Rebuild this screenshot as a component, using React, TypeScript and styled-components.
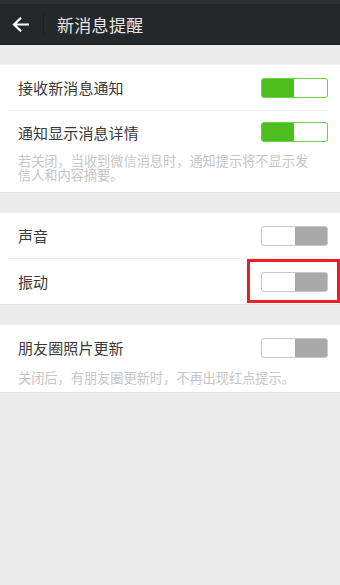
import React from "react";
import styled, { createGlobalStyle } from "styled-components";

const Global = createGlobalStyle`
  html, body { margin: 0; padding: 0; background: #ebebeb; }
  body { font-family: "Noto Sans CJK SC", "Noto Sans", sans-serif; }
  * { box-sizing: border-box; }
`;

const Page = styled.div`
  width: 340px;
  min-height: 585px;
  background: #ebebeb;
  display: flex;
  flex-direction: column;
`;

const Header = styled.header`
  height: 45px;
  background: #25282a;
  border-top: 4px solid #2d3033;
  border-bottom: 1px solid #1d1f21;
  display: flex;
  align-items: center;
  margin-bottom: 19px;
`;

const BackButton = styled.div`
  width: 43px;
  height: 100%;
  display: flex;
  align-items: center;
  justify-content: center;
  padding-right: 2px;
`;

const VSep = styled.div`
  width: 1px;
  height: 22px;
  background: #1b1d1f;
`;

const Title = styled.div`
  margin-left: 13px;
  color: #e6e6e6;
  font-size: 17px;
  letter-spacing: 0.3px;
`;

const Section = styled.section<{ $gap?: number }>`
  background: #ffffff;
  border-top: 1px solid #f2f2f2;
  border-bottom: 1px solid #e3e3e3;
  margin-bottom: ${(p) => p.$gap ?? 19}px;
`;

const Row = styled.div<{ $h?: number }>`
  height: ${(p) => p.$h ?? 45}px;
  display: flex;
  align-items: center;
  justify-content: space-between;
  padding: 0 12px 0 18px;
`;

const Label = styled.span`
  font-size: 15px;
  color: #3a3a3a;
  letter-spacing: 0.1px;
`;

const Divider = styled.div`
  height: 1px;
  background: #f0f0f0;
  margin: 0 12px 0 8px;
`;

const Desc = styled.p<{ $pb?: number }>`
  margin: 0;
  padding: 1px 20px ${(p) => p.$pb ?? 10}px 18px;
  font-size: 13.2px;
  line-height: 14px;
  color: #c6c6c6;
`;

const Highlight = styled.div`
  position: relative;
  display: flex;
  align-items: center;
  justify-content: flex-end;
  &::after {
    content: "";
    position: absolute;
    top: -13px;
    bottom: -11px;
    left: -14px;
    right: -12px;
    border: 3px solid #ee1c24;
  }
`;

const Track = styled.div<{ $on: boolean }>`
  width: 67px;
  height: 20px;
  border-radius: 3px;
  display: flex;
  overflow: hidden;
  border: 1px solid ${(p) => (p.$on ? "#6ccf4a" : "#c8c8c8")};
  background: ${(p) => (p.$on ? "#4cbf1f" : "#a9a9a9")};
  flex-direction: ${(p) => (p.$on ? "row-reverse" : "row")};
`;

const Knob = styled.div`
  width: 33px;
  height: 100%;
  background: #ffffff;
`;

function Toggle({ on }: { on: boolean }) {
  return (
    <Track $on={on}>
      <Knob />
    </Track>
  );
}

export default function App() {
  return (
    <Page>
      <Global />
      <Header>
        <BackButton>
          <svg width="17" height="15" viewBox="0 0 17 15" fill="none">
            <path
              d="M16 7.5H2.5M8.3 1.5L2 7.5l6.3 6"
              stroke="#ffffff"
              strokeWidth="2.2"
              strokeLinecap="square"
            />
          </svg>
        </BackButton>
        <VSep />
        <Title>新消息提醒</Title>
      </Header>

      <Section>
        <Row>
          <Label>接收新消息通知</Label>
          <Toggle on />
        </Row>
        <Divider />
        <Row $h={42}>
          <Label>通知显示消息详情</Label>
          <Toggle on />
        </Row>
        <Desc $pb={10}>若关闭，当收到微信消息时，通知提示将不显示发信人和内容摘要。</Desc>
      </Section>

      <Section>
        <Row>
          <Label>声音</Label>
          <Toggle on={false} />
        </Row>
        <Divider />
        <Row>
          <Label>振动</Label>
          <Highlight>
            <Toggle on={false} />
          </Highlight>
        </Row>
      </Section>

      <Section>
        <Row $h={45}>
          <Label>朋友圈照片更新</Label>
          <Toggle on={false} />
        </Row>
        <Desc $pb={7}>关闭后，有朋友圈更新时，不再出现红点提示。</Desc>
      </Section>
    </Page>
  );
}
